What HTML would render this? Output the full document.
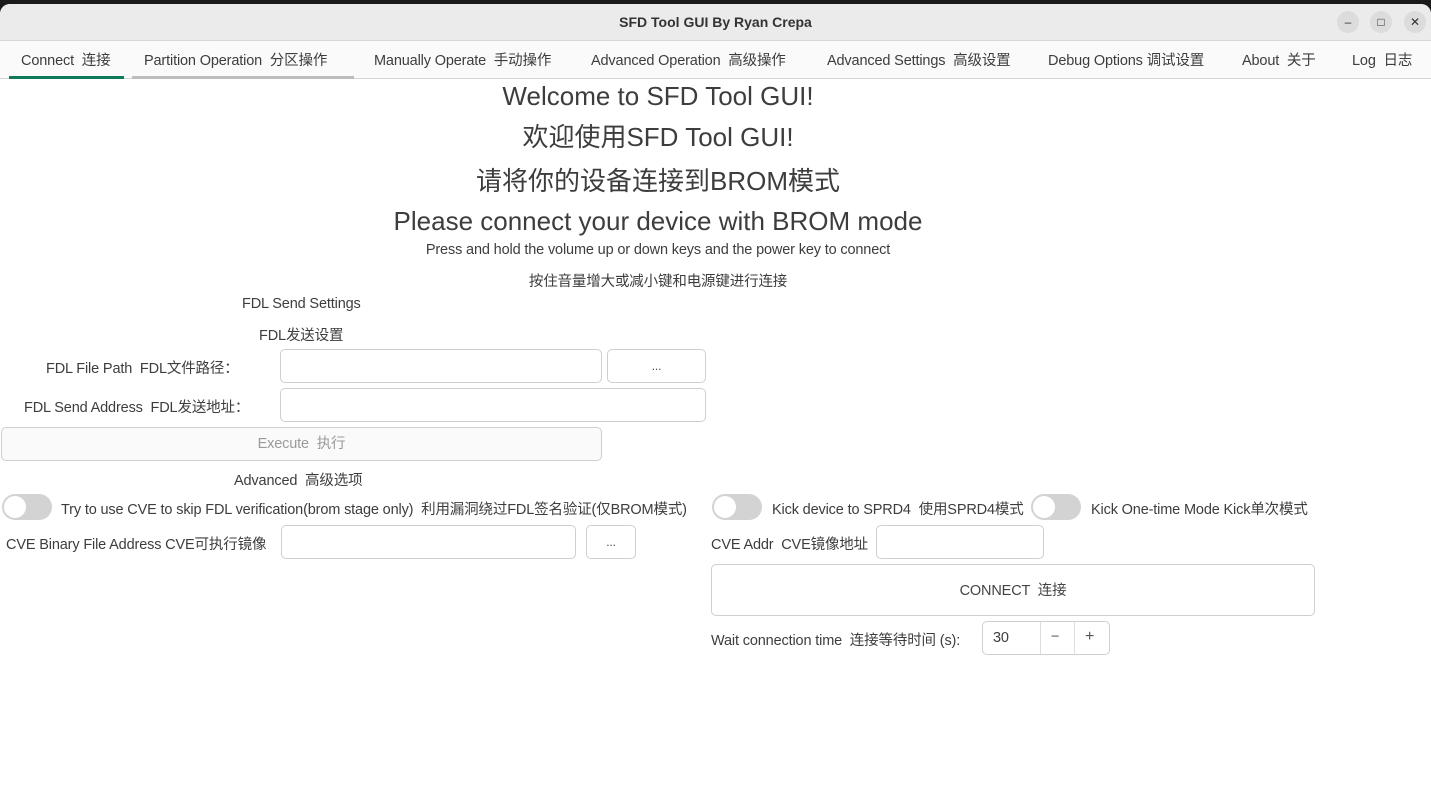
<!DOCTYPE html>
<html><head><meta charset="utf-8"><style>
*{margin:0;padding:0;box-sizing:border-box}
body{width:1431px;height:804px;background:#1a1a1a;font-family:"Liberation Sans","Noto Sans CJK SC",sans-serif;color:#3d3d3d;position:relative;overflow:hidden;font-size:14.5px;letter-spacing:-0.15px}
.win{position:absolute;left:0;top:4px;width:1431px;height:800px;background:#fff;border-radius:10px 10px 0 0;overflow:hidden}
.title{position:absolute;left:0;top:0;width:100%;height:37px;background:#ebebeb;border-bottom:1px solid #d6d6d6;text-align:center;line-height:36px;font-weight:bold;font-size:14px;color:#333;letter-spacing:0}
.wb{position:absolute;top:7px;width:22px;height:22px;border-radius:50%;background:#dcdcdc;font-size:12px;line-height:22px;text-align:center;color:#333;font-weight:normal}
.tabs{position:absolute;left:0;top:37px;width:100%;height:38px;background:#fafafa;border-bottom:1px solid #d4d4d4}
.t{position:absolute;top:1px;line-height:38px;white-space:nowrap;color:#3d3d3d}
.a{position:absolute;white-space:nowrap;margin-top:-1px}
.c{text-align:center}
.in{position:absolute;border:1px solid #cfcfcf;border-radius:5px;background:#fff}
.btn{position:absolute;border:1px solid #cfcfcf;border-radius:5px;background:#fff;text-align:center;color:#444}
.sw{position:absolute;width:50px;height:26px;border-radius:13px;background:#d3d3d3}
.sw:after{content:"";position:absolute;left:2px;top:2px;width:22px;height:22px;border-radius:50%;background:#fff}
.h{font-size:26px;line-height:32px;letter-spacing:0}
</style></head><body>
<div class="win">
<div class="title">SFD Tool GUI By Ryan Crepa
<div class="wb" style="left:1337px">–</div><div class="wb" style="left:1370px">□</div><div class="wb" style="left:1404px">✕</div></div>
<div class="tabs">
<div class="t" style="left:21px">Connect &nbsp;连接</div>
<div style="position:absolute;left:9px;top:35px;width:115px;height:3px;background:#0e7a5a"></div>
<div class="t" style="left:144px">Partition Operation &nbsp;分区操作</div>
<div style="position:absolute;left:132px;top:35px;width:222px;height:3px;background:#bdbdbd"></div>
<div class="t" style="left:374px">Manually Operate &nbsp;手动操作</div>
<div class="t" style="left:591px">Advanced Operation &nbsp;高级操作</div>
<div class="t" style="left:827px">Advanced Settings &nbsp;高级设置</div>
<div class="t" style="left:1048px">Debug Options 调试设置</div>
<div class="t" style="left:1242px">About &nbsp;关于</div>
<div class="t" style="left:1352px">Log &nbsp;日志</div>
</div>
<div class="a c h" style="left:0;width:1316px;top:77px">Welcome to SFD Tool GUI!</div>
<div class="a c h" style="left:0;width:1316px;top:118px">欢迎使用SFD Tool GUI!</div>
<div class="a c h" style="left:0;width:1316px;top:162px">请将你的设备连接到BROM模式</div>
<div class="a c h" style="left:0;width:1316px;top:202px">Please connect your device with BROM mode</div>
<div class="a c" style="left:0;width:1316px;top:239px">Press and hold the volume up or down keys and the power key to connect</div>
<div class="a c" style="left:0;width:1316px;top:267px">按住音量增大或减小键和电源键进行连接</div>
<div class="a" style="left:242px;top:293px">FDL Send Settings</div>
<div class="a" style="left:259px;top:321px">FDL发送设置</div>
<div class="a" style="left:46px;top:354px">FDL File Path &nbsp;FDL文件路径：</div>
<div class="in" style="left:280px;top:345px;width:322px;height:34px"></div>
<div class="btn" style="left:607px;top:345px;width:99px;height:34px;line-height:32px;font-size:12px">...</div>
<div class="a" style="left:24px;top:393px">FDL Send Address &nbsp;FDL发送地址：</div>
<div class="in" style="left:280px;top:384px;width:426px;height:34px"></div>
<div class="btn" style="left:1px;top:423px;width:601px;height:34px;line-height:32px;color:#9a9a9a;background:#fafafa">Execute &nbsp;执行</div>
<div class="a" style="left:234px;top:466px">Advanced &nbsp;高级选项</div>
<div class="sw" style="left:2px;top:490px"></div>
<div class="a" style="left:61px;top:495px">Try to use CVE to skip FDL verification(brom stage only) &nbsp;利用漏洞绕过FDL签名验证(仅BROM模式)</div>
<div class="sw" style="left:712px;top:490px"></div>
<div class="a" style="left:772px;top:495px">Kick device to SPRD4 &nbsp;使用SPRD4模式</div>
<div class="sw" style="left:1031px;top:490px"></div>
<div class="a" style="left:1091px;top:495px">Kick One-time Mode Kick单次模式</div>
<div class="a" style="left:6px;top:530px">CVE Binary File Address CVE可执行镜像</div>
<div class="in" style="left:281px;top:521px;width:295px;height:34px"></div>
<div class="btn" style="left:586px;top:521px;width:50px;height:34px;line-height:32px;font-size:12px">...</div>
<div class="a" style="left:711px;top:530px">CVE Addr &nbsp;CVE镜像地址</div>
<div class="in" style="left:876px;top:521px;width:168px;height:34px"></div>
<div class="btn" style="left:711px;top:560px;width:604px;height:52px;line-height:52px">CONNECT &nbsp;连接</div>
<div class="a" style="left:711px;top:626px">Wait connection time &nbsp;连接等待时间 (s):</div>
<div class="in" style="left:982px;top:617px;width:128px;height:34px">
<span style="position:absolute;left:10px;top:8px">30</span>
<span style="position:absolute;left:57px;top:0;width:1px;height:32px;background:#ddd"></span>
<span style="position:absolute;left:68px;top:7px;color:#555">−</span>
<span style="position:absolute;left:91px;top:0;width:1px;height:32px;background:#ddd"></span>
<span style="position:absolute;left:102px;top:6px;color:#555;font-size:16px">+</span>
</div>
</div>
</body></html>
